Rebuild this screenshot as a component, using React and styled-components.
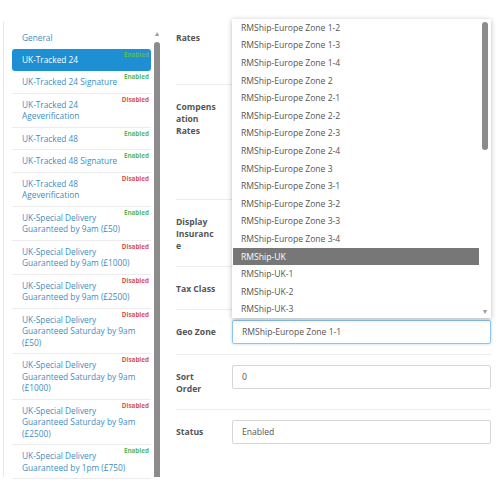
import React from "react";
import styled, { createGlobalStyle } from "styled-components";

const methods = [
  { name: "UK-Tracked 24", on: true, active: true },
  { name: "UK-Tracked 24 Signature", on: true },
  { name: "UK-Tracked 24\nAgeverification", on: false },
  { name: "UK-Tracked 48", on: true },
  { name: "UK-Tracked 48 Signature", on: true },
  { name: "UK-Tracked 48\nAgeverification", on: false },
  { name: "UK-Special Delivery\nGuaranteed by 9am (£50)", on: true },
  { name: "UK-Special Delivery\nGuaranteed by 9am (£1000)", on: false },
  { name: "UK-Special Delivery\nGuaranteed by 9am (£2500)", on: false },
  { name: "UK-Special Delivery\nGuaranteed Saturday by 9am\n(£50)", on: false },
  { name: "UK-Special Delivery\nGuaranteed Saturday by 9am\n(£1000)", on: false },
  { name: "UK-Special Delivery\nGuaranteed Saturday by 9am\n(£2500)", on: false },
  { name: "UK-Special Delivery\nGuaranteed by 1pm (£750)", on: true },
];

const zones = [
  "RMShip-Europe Zone 1-2",
  "RMShip-Europe Zone 1-3",
  "RMShip-Europe Zone 1-4",
  "RMShip-Europe Zone 2",
  "RMShip-Europe Zone 2-1",
  "RMShip-Europe Zone 2-2",
  "RMShip-Europe Zone 2-3",
  "RMShip-Europe Zone 2-4",
  "RMShip-Europe Zone 3",
  "RMShip-Europe Zone 3-1",
  "RMShip-Europe Zone 3-2",
  "RMShip-Europe Zone 3-3",
  "RMShip-Europe Zone 3-4",
  "RMShip-UK",
  "RMShip-UK-1",
  "RMShip-UK-2",
  "RMShip-UK-3",
];

export default function App() {
  return (
    <Page>
      <GlobalStyle />
      <Sidebar>
        <MethodList>
          <MethodItem plain>General</MethodItem>
          {methods.map((m) => (
            <MethodItem key={m.name} active={m.active}>
              {m.name}
              <Badge on={m.on}>{m.on ? "Enabled" : "Disabled"}</Badge>
            </MethodItem>
          ))}
        </MethodList>
        <SideScroll>
          <Arrow>▴</Arrow>
          <SideThumb />
        </SideScroll>
      </Sidebar>

      <Form>
        <Row>
          <Label>Rates</Label>
          <Field h={48} />
        </Row>
        <Row>
          <Label>Compensation Rates</Label>
          <Field h={94} />
        </Row>
        <Row>
          <Label>Display Insurance</Label>
          <Field h={26} />
        </Row>
        <Row>
          <Label>Tax Class</Label>
          <Field h={22} />
        </Row>
        <Row>
          <Label>Geo Zone</Label>
          <Input focused>RMShip-Europe Zone 1-1</Input>
        </Row>
        <Row>
          <Label>Sort Order</Label>
          <Input>0</Input>
        </Row>
        <Row last>
          <Label>Status</Label>
          <Input>Enabled</Input>
        </Row>

        <Dropdown>
          <Options>
            {zones.map((z) => (
              <Option key={z} selected={z === "RMShip-UK"}>
                {z}
              </Option>
            ))}
          </Options>
          <DropScroll>
            <DropThumb />
            <DownArrow>▾</DownArrow>
          </DropScroll>
        </Dropdown>
      </Form>
    </Page>
  );
}

const GlobalStyle = createGlobalStyle`
  html, body {
    margin: 0;
    background: #fff;
    font-family: "Open Sans", "Liberation Sans", sans-serif;
  }
`;

const Page = styled.div`
  display: flex;
  align-items: flex-start;
  width: 500px;
  height: 500px;
  overflow: hidden;
`;

const Sidebar = styled.div`
  display: flex;
  margin: 22px 0 0 3px;
  height: 455px;
  border-left: 1px solid #e6e6e6;
  padding-left: 8px;
`;

const MethodList = styled.ul`
  list-style: none;
  margin: 0;
  padding: 4px 0 0;
  width: 139px;
`;

const MethodItem = styled.li`
  position: relative;
  padding: ${(p) => (p.plain ? "6px 4px 4px 10px" : "5px 4px 5px 10px")};
  font-size: 8.3px;
  line-height: 11.5px;
  white-space: pre;
  color: ${(p) => (p.active ? "#fff" : "#3d8dc4")};
  background: ${(p) => (p.active ? "#1e8fd2" : "transparent")};
  border-radius: ${(p) => (p.active ? "3px" : "0")};
  border-bottom: 1px solid ${(p) => (p.plain || p.active ? "transparent" : "#ececec")};
`;

const Badge = styled.span`
  position: absolute;
  top: 2px;
  right: 2px;
  font-size: 6.3px;
  line-height: 8px;
  font-weight: 700;
  color: ${(p) => (p.on ? "#5cb85c" : "#d9534f")};
`;

const SideScroll = styled.div`
  display: flex;
  flex-direction: column;
  align-items: center;
  width: 9px;
  margin-left: 1px;
`;

const Arrow = styled.span`
  font-size: 8px;
  line-height: 8px;
  color: #9a9a9a;
  margin-top: 7px;
`;

const SideThumb = styled.div`
  width: 6px;
  flex: 1;
  margin-top: 5px;
  background: #8c8c8c;
  border-radius: 3px 3px 0 0;
`;

const Form = styled.div`
  position: relative;
  margin: 16px 0 0 15px;
  width: 315px;
`;

const Row = styled.div`
  display: flex;
  gap: 16px;
  padding: 10px 0;
  border-bottom: 1px solid ${(p) => (p.last ? "transparent" : "#ececec")};
`;

const Label = styled.div`
  width: 40px;
  flex-shrink: 0;
  padding: 6px 0 4px;
  font-size: 8.6px;
  line-height: 12px;
  font-weight: 700;
  color: #555;
  overflow-wrap: anywhere;
`;

const Field = styled.div`
  flex: 1;
  height: ${(p) => p.h}px;
`;

const Input = styled.div`
  flex: 1;
  height: 24px;
  box-sizing: border-box;
  padding: 0 9px;
  display: flex;
  align-items: center;
  font-size: 8.6px;
  color: #555;
  border: 1px solid ${(p) => (p.focused ? "#8fc3ea" : "#d6d6d6")};
  border-radius: 2px;
  box-shadow: ${(p) => (p.focused ? "0 0 3px rgba(102,175,233,0.5)" : "none")};
`;

const Dropdown = styled.div`
  position: absolute;
  top: 3px;
  left: 56px;
  width: 259px;
  height: 299px;
  display: flex;
  background: #fff;
  box-shadow: 0 1px 5px rgba(0, 0, 0, 0.28);
  overflow: hidden;
`;

const Options = styled.div`
  flex: 1;
  padding-left: 1px;
`;

const Option = styled.div`
  height: 17.6px;
  display: flex;
  align-items: center;
  padding-left: 8px;
  font-size: 8.6px;
  color: ${(p) => (p.selected ? "#fff" : "#555")};
  background: ${(p) => (p.selected ? "#777" : "transparent")};
`;

const DropScroll = styled.div`
  width: 12px;
  display: flex;
  flex-direction: column;
  align-items: center;
`;

const DropThumb = styled.div`
  width: 6px;
  height: 128px;
  margin-top: 3px;
  background: #8c8c8c;
  border-radius: 3px;
`;

const DownArrow = styled.span`
  margin-top: auto;
  margin-bottom: 3px;
  font-size: 8px;
  line-height: 8px;
  color: #9a9a9a;
`;
